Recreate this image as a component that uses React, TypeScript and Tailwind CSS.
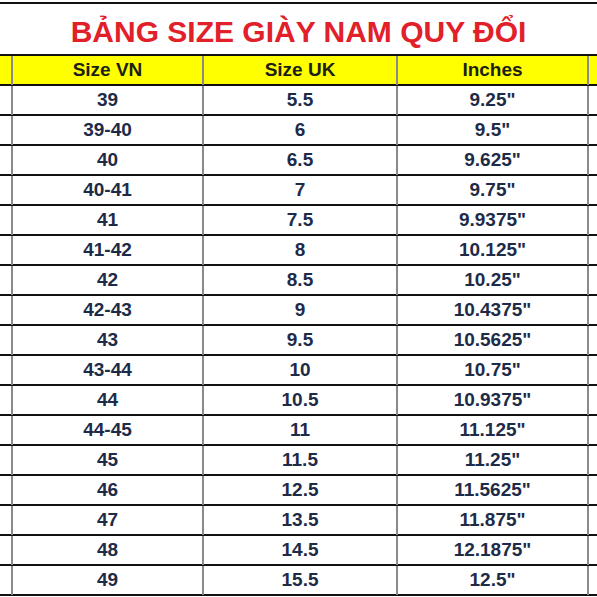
const ROWS: [string, string, string][] = [
  ["39", "5.5", '9.25"'],
  ["39-40", "6", '9.5"'],
  ["40", "6.5", '9.625"'],
  ["40-41", "7", '9.75"'],
  ["41", "7.5", '9.9375"'],
  ["41-42", "8", '10.125"'],
  ["42", "8.5", '10.25"'],
  ["42-43", "9", '10.4375"'],
  ["43", "9.5", '10.5625"'],
  ["43-44", "10", '10.75"'],
  ["44", "10.5", '10.9375"'],
  ["44-45", "11", '11.125"'],
  ["45", "11.5", '11.25"'],
  ["46", "12.5", '11.5625"'],
  ["47", "13.5", '11.875"'],
  ["48", "14.5", '12.1875"'],
  ["49", "15.5", '12.5"'],
];

const GRID = "grid grid-cols-[11px_191px_194px_191px_1fr]";
const CELL = "flex items-center justify-center border-l-2 border-[#8a8a8a]";

export default function App() {
  return (
    <div
      className="w-[597px] h-[597px] overflow-hidden bg-white"
      style={{ fontFamily: '"Liberation Sans", Arial, sans-serif' }}
    >
      <div className="mt-[2px] border-t-2 border-[#111]" />
      <div className="flex h-[50px] items-center justify-center pt-[5px]">
        <h1 className="text-[30px] font-bold leading-none text-[#e1202a]">
          BẢNG SIZE GIÀY NAM QUY ĐỔI
        </h1>
      </div>

      <div className="border-t-2 border-[#111]">
        <div className={`${GRID} h-[30px] border-b-2 border-[#111] bg-[#ffff00] text-[19px] font-bold text-[#1c1f14]`}>
          <div />
          <div className={CELL}>Size VN</div>
          <div className={CELL}>Size UK</div>
          <div className={CELL}>Inches</div>
          <div className={CELL} />
        </div>

        {ROWS.map(([vn, uk, inches]) => (
          <div
            key={vn}
            className={`${GRID} h-[30px] border-b-2 border-[#111] text-[19px] font-bold text-[#1e2b48]`}
          >
            <div />
            <div className={CELL}>{vn}</div>
            <div className={CELL}>{uk}</div>
            <div className={CELL}>{inches}</div>
            <div className={CELL} />
          </div>
        ))}
      </div>
    </div>
  );
}
